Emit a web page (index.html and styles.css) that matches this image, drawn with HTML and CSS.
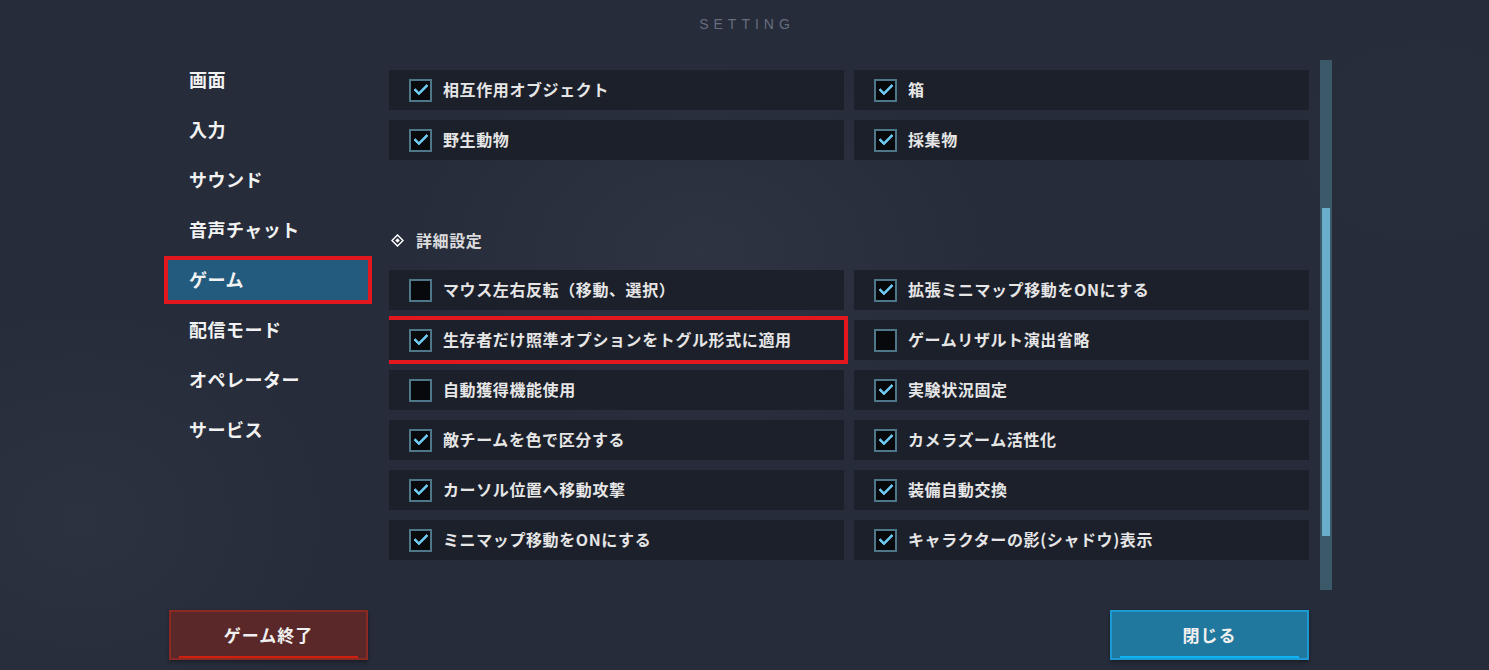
FILE: index.html
```html
<!DOCTYPE html>
<html lang="ja">

<head>
    <meta charset="UTF-8">
    <meta name="viewport" content="width=device-width, initial-scale=1.0">
    <title>Setting</title>
    <link rel="stylesheet" href="styles.css">
</head>

<body>

    <div class="screen">
        <header class="title">SETTING</header>

        <div class="main">
            <nav class="menu">
                <div class="menu-item">画面</div>
                <div class="menu-item">入力</div>
                <div class="menu-item">サウンド</div>
                <div class="menu-item">音声チャット</div>
                <div class="menu-item active">ゲーム</div>
                <div class="menu-item">配信モード</div>
                <div class="menu-item">オペレーター</div>
                <div class="menu-item">サービス</div>
            </nav>

            <section class="content">
                <div class="grid">
                    <div class="row"><span class="box on"></span>相互作用オブジェクト</div>
                    <div class="row"><span class="box on"></span>箱</div>
                    <div class="row"><span class="box on"></span>野生動物</div>
                    <div class="row"><span class="box on"></span>採集物</div>
                </div>

                <h3 class="section">
                    <svg class="diamond" width="13" height="13" viewBox="0 0 13 13">
                        <path d="M6.5 1 L12 6.5 L6.5 12 L1 6.5 Z" fill="none" stroke="#fff" stroke-width="1.5" />
                        <path d="M6.5 4.2 L8.8 6.5 L6.5 8.8 L4.2 6.5 Z" fill="#fff" />
                    </svg>
                    詳細設定
                </h3>

                <div class="grid">
                    <div class="row"><span class="box"></span>マウス左右反転（移動、選択）</div>
                    <div class="row"><span class="box on"></span>拡張ミニマップ移動をONにする</div>
                    <div class="row highlight"><span class="box on"></span>生存者だけ照準オプションをトグル形式に適用</div>
                    <div class="row"><span class="box"></span>ゲームリザルト演出省略</div>
                    <div class="row"><span class="box"></span>自動獲得機能使用</div>
                    <div class="row"><span class="box on"></span>実験状況固定</div>
                    <div class="row"><span class="box on"></span>敵チームを色で区分する</div>
                    <div class="row"><span class="box on"></span>カメラズーム活性化</div>
                    <div class="row"><span class="box on"></span>カーソル位置へ移動攻撃</div>
                    <div class="row"><span class="box on"></span>装備自動交換</div>
                    <div class="row"><span class="box on"></span>ミニマップ移動をONにする</div>
                    <div class="row"><span class="box on"></span>キャラクターの影(シャドウ)表示</div>
                </div>
            </section>

            <div class="scrollbar">
                <div class="thumb"></div>
            </div>
        </div>

        <footer class="footer">
            <button class="btn btn-quit">ゲーム終了</button>
            <button class="btn btn-close">閉じる</button>
        </footer>
    </div>

</body>

</html>
```

FILE: styles.css
```css
body {
    margin: 0;
    padding: 0;
    width: 1489px;
    height: 670px;
    overflow: hidden;
    font-family: 'Noto Sans CJK JP', 'Noto Sans', sans-serif;
    color: #ececec;
    background-color: #262c3a;
    background-image:
        radial-gradient(ellipse 300px 200px at 700px 250px, rgba(60, 66, 80, 0.35), transparent),
        radial-gradient(ellipse 260px 220px at 80px 520px, rgba(55, 62, 74, 0.35), transparent),
        radial-gradient(ellipse 240px 200px at 1420px 140px, rgba(40, 46, 58, 0.5), transparent);
}

.screen {
    display: flex;
    flex-direction: column;
    height: 670px;
}

.title {
    height: 48px;
    line-height: 48px;
    text-align: center;
    font-family: 'Liberation Sans', sans-serif;
    font-size: 14px;
    letter-spacing: 5px;
    color: #666d7d;
    padding-left: 5px;
}

.main {
    display: flex;
    margin-top: 12px;
    height: 530px;
    padding-left: 168px;
}

/* left menu */
.menu {
    width: 200px;
    margin-right: 21px;
    display: flex;
    flex-direction: column;
    gap: 10px;
}

.menu-item {
    height: 40px;
    line-height: 38px;
    padding-left: 21px;
    font-size: 18px;
    font-weight: bold;
    letter-spacing: 0.5px;
    color: #f2f2f2;
}

.menu-item.active {
    background-color: #235b7f;
    outline: 4px solid #e3181f;
}

/* options */
.content {
    width: 920px;
    overflow: hidden;
    padding-top: 10px;
}

.grid {
    display: grid;
    grid-template-columns: 455px 455px;
    column-gap: 10px;
    row-gap: 10px;
}

.row {
    height: 40px;
    box-sizing: border-box;
    padding-bottom: 2px;
    display: flex;
    align-items: center;
    gap: 11px;
    padding-left: 20px;
    background-color: #1c202b;
    font-size: 16px;
    font-weight: bold;
    letter-spacing: 0.6px;
    color: #e6e6e6;
}

.row.highlight {
    outline: 4px solid #e3181f;
}

.box {
    width: 23px;
    height: 23px;
    margin-top: 2px;
    box-sizing: border-box;
    border: 2px solid #4e7889;
    background-color: #07090d;
    flex-shrink: 0;
    position: relative;
}

.box.on::after {
    content: '';
    position: absolute;
    left: 3px;
    top: 3px;
    width: 11px;
    height: 5px;
    border-left: 3.5px solid #6cc8ee;
    border-bottom: 3.5px solid #6cc8ee;
    border-radius: 1px;
    transform: rotate(-45deg);
}

.section {
    margin: 70px 0 20px 2px;
    height: 20px;
    display: flex;
    align-items: center;
    gap: 12px;
    font-size: 16px;
    font-weight: bold;
    letter-spacing: 0.6px;
    color: #dcdcdc;
}

/* scrollbar */
.scrollbar {
    margin-left: 11px;
    width: 12px;
    height: 530px;
    background-color: #3b5969;
    position: relative;
}

.thumb {
    position: absolute;
    left: 2px;
    right: 2px;
    top: 148px;
    height: 328px;
    background-color: #6aaecc;
}

/* bottom buttons */
.footer {
    display: flex;
    justify-content: space-between;
    margin-top: 20px;
    padding: 0 180px 0 169px;
}

.btn {
    width: 199px;
    height: 50px;
    position: relative;
    font-family: inherit;
    font-size: 17px;
    font-weight: bold;
    letter-spacing: 1px;
    color: #f0f0f0;
    cursor: pointer;
    padding-bottom: 3px;
    box-shadow: 0 2px 4px rgba(0, 0, 0, 0.35);
}

.btn::after {
    content: '';
    position: absolute;
    left: 8px;
    right: 8px;
    bottom: 0;
    height: 2px;
}

.btn-quit {
    background-color: #5a2828;
    border: 2px solid #8a2a22;
}

.btn-quit::after {
    background-color: #d0200f;
}

.btn-close {
    background-color: #21789e;
    border: 2px solid #1b9ad3;
}

.btn-close::after {
    background-color: #0fb4f5;
}
```
